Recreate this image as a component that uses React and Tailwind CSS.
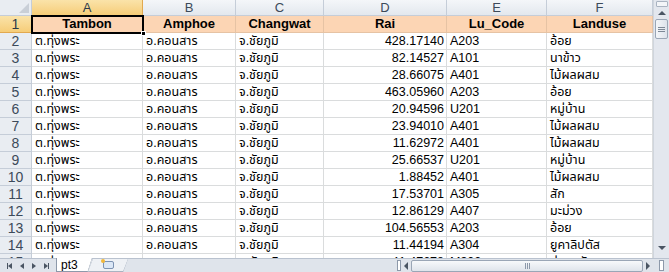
import React from "react"

const cols = [
    { key: "A", w: 111 },
    { key: "B", w: 93 },
    { key: "C", w: 88 },
    { key: "D", w: 123 },
    { key: "E", w: 100 },
    { key: "F", w: 106 },
]

const heads = ["Tambon", "Amphoe", "Changwat", "Rai", "Lu_Code", "Landuse"]

const data = [
    ["428.17140", "A203", "อ้อย"],
    ["82.14527", "A101", "นาข้าว"],
    ["28.66075", "A401", "ไม้ผลผสม"],
    ["463.05960", "A203", "อ้อย"],
    ["20.94596", "U201", "หมู่บ้าน"],
    ["23.94010", "A401", "ไม้ผลผสม"],
    ["11.62972", "A401", "ไม้ผลผสม"],
    ["25.66537", "U201", "หมู่บ้าน"],
    ["1.88452", "A401", "ไม้ผลผสม"],
    ["17.53701", "A305", "สัก"],
    ["12.86129", "A407", "มะม่วง"],
    ["104.56553", "A203", "อ้อย"],
    ["11.44194", "A304", "ยูคาลิปตัส"],
    ["41.47678", "M302", "บ่อลูกรัง"],
]

const font = { fontFamily: "'Liberation Sans', Tahoma, 'Noto Sans Thai', 'Noto Sans', sans-serif" }

function ColHeader(){
    return(
        <div className="flex h-[16px] shrink-0">
            <div className="w-[32px] shrink-0 border-r border-b border-[#c5cdd8] bg-[#e9edf2] relative">
                <div className="absolute right-[2px] bottom-[2px] w-0 h-0 border-l-[10px] border-l-transparent border-b-[10px] border-b-[#c9cfd7]"></div>
            </div>
            {cols.map((c, i) => (
                <div key={c.key}
                    style={{ width: c.w }}
                    className={i === 0
                        ? "shrink-0 border-r border-b border-[#e2a94f] bg-gradient-to-b from-[#fae3a9] to-[#f6cd78] flex items-center justify-center text-[13px] text-[#2b3a4a]"
                        : "shrink-0 border-r border-b border-[#c5cdd8] bg-gradient-to-b from-[#f4f6f9] to-[#e3e8ee] flex items-center justify-center text-[13px] text-[#3c4a5a]"}
                >
                    {c.key}
                </div>
            ))}
        </div>
    )
}

function Row({ n, cells, head }){
    return(
        <div className="flex h-[17px] shrink-0">
            <div className={head
                ? "w-[32px] shrink-0 border-r border-b border-[#e2a94f] bg-gradient-to-b from-[#fae3a9] to-[#f6cd78] flex items-center justify-center text-[14px] text-[#2b3a4a]"
                : "w-[32px] shrink-0 border-r border-b border-[#c5cdd8] bg-[#e9edf2] flex items-center justify-center text-[14px] text-[#3c4a5a]"}
            >
                {n}
            </div>
            {cols.map((c, i) => {
                const right = i === 3 && !head
                return(
                    <div key={c.key}
                        style={{ width: c.w }}
                        className={head
                            ? "shrink-0 border-r border-b border-[#e6c3a4] bg-[#fcd5b4] flex items-center justify-center font-bold text-[13px] text-black whitespace-nowrap overflow-hidden"
                            : right
                                ? "shrink-0 border-r border-b border-[#dadcdd] bg-white flex items-center justify-end pr-[2px] text-[12.5px] text-black whitespace-nowrap overflow-hidden"
                                : "shrink-0 border-r border-b border-[#dadcdd] bg-white flex items-center pl-[3px] text-[12.5px] text-black whitespace-nowrap overflow-hidden"}
                    >
                        {cells[i]}
                    </div>
                )
            })}
        </div>
    )
}

function VScroll(){
    return(
        <div className="w-[16px] shrink-0 bg-[#e3e7ee] border-l border-[#cfd5dd] flex flex-col items-center">
            <div className="w-[12px] h-[6px] mt-[1px] border border-[#a9b3c1] bg-[#f3f5f8] rounded-[1px]"></div>
            <div className="h-[12px] flex items-center justify-center">
                <div className="w-0 h-0 border-l-[4px] border-l-transparent border-r-[4px] border-r-transparent border-b-[4px] border-b-[#4a5563]"></div>
            </div>
            <div className="w-[13px] h-[20px] border border-[#9aa6b6] rounded-[2px] bg-gradient-to-r from-[#f4f6f9] to-[#dde3eb] flex flex-col items-center justify-center gap-[1px]">
                <div className="w-[7px] h-[1px] bg-[#7d8896]"></div>
                <div className="w-[7px] h-[1px] bg-[#7d8896]"></div>
                <div className="w-[7px] h-[1px] bg-[#7d8896]"></div>
            </div>
            <div className="flex-1"></div>
            <div className="h-[12px] mb-[4px] flex items-center justify-center">
                <div className="w-0 h-0 border-l-[4px] border-l-transparent border-r-[4px] border-r-transparent border-t-[4px] border-t-[#4a5563]"></div>
            </div>
        </div>
    )
}

function TabBar(){
    return(
        <div className="h-[14px] shrink-0 flex bg-[#dfe4eb] border-t border-[#b9c2cf]">
            <div className="w-[56px] flex items-center justify-around px-[3px]">
                <div className="flex items-center">
                    <div className="w-[1px] h-[6px] bg-[#4a5563]"></div>
                    <div className="w-0 h-0 border-t-[3px] border-t-transparent border-b-[3px] border-b-transparent border-r-[4px] border-r-[#4a5563]"></div>
                </div>
                <div className="w-0 h-0 border-t-[3px] border-t-transparent border-b-[3px] border-b-transparent border-r-[4px] border-r-[#4a5563]"></div>
                <div className="w-0 h-0 border-t-[3px] border-t-transparent border-b-[3px] border-b-transparent border-l-[4px] border-l-[#4a5563]"></div>
                <div className="flex items-center">
                    <div className="w-0 h-0 border-t-[3px] border-t-transparent border-b-[3px] border-b-transparent border-l-[4px] border-l-[#4a5563]"></div>
                    <div className="w-[1px] h-[6px] bg-[#4a5563]"></div>
                </div>
            </div>
            <div className="w-[36px] -mt-[1px] h-[14px] bg-[#8d99aa] [clip-path:polygon(0_0,100%_0,88%_100%,0_100%)] pl-[1px] pb-[1px]">
                <div className="w-full h-full bg-white [clip-path:polygon(0_0,100%_0,88%_100%,0_100%)] flex items-center pl-[4px] text-[12px] leading-[12px] text-black">
                    pt3
                </div>
            </div>
            <div className="w-[40px] -ml-[4px] h-[13px] bg-[#a9b3c1] [clip-path:polygon(12%_0,100%_0,88%_100%,0_100%)] pb-[1px]">
                <div className="w-full h-full bg-[#eef1f5] [clip-path:polygon(12%_0,100%_0,88%_100%,0_100%)] flex items-center justify-center">
                    <div className="w-[11px] h-[8px] rounded-[2px] border border-[#7d93b2] bg-[#dbe7f6] relative">
                        <div className="absolute -left-[3px] -top-[3px] w-[4px] h-[4px] rounded-full bg-[#f3b93a]"></div>
                    </div>
                </div>
            </div>
            <div className="flex-1"></div>
            <div className="w-[258px] flex items-center">
                <div className="w-[4px] h-[11px] ml-[2px] border border-[#8d99aa] bg-white"></div>
                <div className="w-[10px] flex items-center justify-center">
                    <div className="w-0 h-0 border-t-[4px] border-t-transparent border-b-[4px] border-b-transparent border-r-[4px] border-r-[#4a5563]"></div>
                </div>
                <div className="flex-1 h-[12px] rounded-[2px] border border-[#9aa6b6] bg-gradient-to-b from-[#f7f9fb] to-[#dfe4eb] flex items-center justify-center gap-[1px]">
                    <div className="w-[1px] h-[6px] bg-[#8d99aa]"></div>
                    <div className="w-[1px] h-[6px] bg-[#8d99aa]"></div>
                    <div className="w-[1px] h-[6px] bg-[#8d99aa]"></div>
                </div>
                <div className="w-[10px] flex items-center justify-center">
                    <div className="w-0 h-0 border-t-[4px] border-t-transparent border-b-[4px] border-b-transparent border-l-[4px] border-l-[#4a5563]"></div>
                </div>
            </div>
            <div className="w-[16px] flex items-center justify-center">
                <div className="w-[5px] h-[11px] border border-[#8d99aa] bg-white"></div>
            </div>
        </div>
    )
}

export default function App(){
    return(
        <div className="w-[669px] h-[272px] overflow-hidden flex flex-col bg-white" style={font}>
            <div className="flex flex-1 min-h-0">
                <div className="flex-1 flex flex-col overflow-hidden relative">
                    <ColHeader />
                    <Row n={1} cells={heads} head />
                    {data.map((d, i) => (
                        <Row key={i} n={i + 2} cells={["ต.ทุ่งพระ", "อ.คอนสาร", "จ.ชัยภูมิ", ...d]} />
                    ))}
                    {/* active cell A1 */}
                    <div className="absolute left-[31px] top-[15px] w-[113px] h-[19px] border-2 border-black pointer-events-none">
                        <div className="absolute -right-[4px] -bottom-[4px] w-[5px] h-[5px] bg-black border border-white"></div>
                    </div>
                </div>
                <VScroll />
            </div>
            <TabBar />
        </div>
    )
}
